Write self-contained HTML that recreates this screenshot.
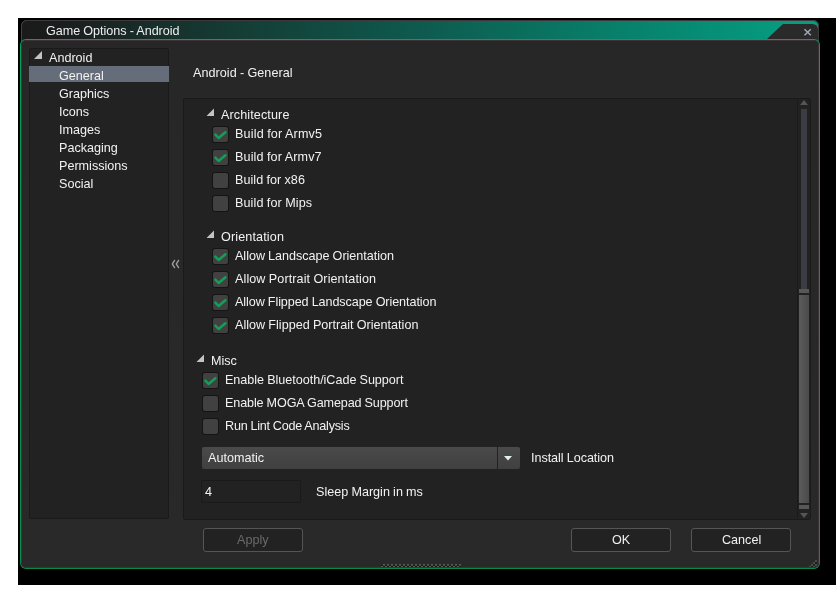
<!DOCTYPE html>
<html><head><meta charset="utf-8">
<style>
html,body{margin:0;padding:0;}
body{-webkit-font-smoothing:antialiased;width:840px;height:589px;background:#fff;position:relative;overflow:hidden;font-family:"Liberation Sans",sans-serif;}
.a{position:absolute;}
.t{position:absolute;will-change:transform;font-size:12.6px;word-spacing:-0.3px;line-height:14px;white-space:nowrap;color:#f2f2f2;}
#blk{left:18px;top:18px;width:818px;height:567px;background:#000;}
#title{left:21px;top:20px;width:798px;height:25px;border-radius:6px 6px 0 0;
 background:linear-gradient(90deg,#1a1a1a 0%,#1a1e1e 5%,#153a33 25%,#0e5a4e 50%,#087d68 72.6%,#06937a 90%,#059d80 97%,#059e80 100%);
 box-shadow:inset 0 1px 0 #3e3a3b, inset 1px 0 0 #444, inset -1px 0 0 #3e3a3b;}
#gb{left:20px;top:39px;width:800px;height:530px;border-radius:6px;background:linear-gradient(#00a35a,#078a4e);}
#body{left:21px;top:40px;width:798px;height:528px;background:linear-gradient(#272727,#292929);box-shadow:inset 0 0 0 1px #3a3234;border-radius:5px;}
.panel{position:absolute;background:#222;border:1px solid #1a1a1a;border-radius:2px;}
.cb{position:absolute;width:15px;height:15px;background:#414141;border-radius:2px;box-shadow:0 0 0 1px #141414;}
.cb svg{position:absolute;left:0;top:0;}
.tri{position:absolute;width:0;height:0;}
.btn{position:absolute;width:98px;height:22px;border:1px solid #555;border-radius:3px;background:#222;}
</style></head><body>
<div id="blk" class="a"></div>
<div id="title" class="a"></div>
<svg class="a" style="left:760px;top:20px" width="60" height="26">
  <path d="M7 19 L23 4 L52 4 Q58 4 58 10 L58 25 L7 25 Z" fill="#2a2a2a"/><path d="M58.5 10 L58.5 25" stroke="#3e3a3b" stroke-width="1"/>
  <path d="M44.5 9.3 L50.8 15.2 M50.8 9.3 L44.5 15.2" stroke="#a0a8b4" stroke-width="1.5"/>
</svg>
<div class="t" style="left:46px;top:24px;color:#eee;letter-spacing:-0.033px">Game Options - Android</div>
<div id="gb" class="a"></div><div id="body" class="a"></div>

<!-- tree -->
<div class="panel" style="left:29px;top:48px;width:138px;height:469px;"></div>
<div class="a" style="left:29px;top:66px;width:140px;height:16px;background:#646d79"></div>
<svg class="a" style="left:34px;top:51px" width="9" height="9"><path d="M8 0 L8 8 L0 8 Z" fill="#c4c4c4"/></svg>
<div class="t" style="left:49px;top:51px">Android</div>
<div class="t" style="left:59px;top:69px">General</div>
<div class="t" style="left:59px;top:87px">Graphics</div>
<div class="t" style="left:59px;top:105px">Icons</div>
<div class="t" style="left:59px;top:123px">Images</div>
<div class="t" style="left:59px;top:141px">Packaging</div>
<div class="t" style="left:59px;top:159px">Permissions</div>
<div class="t" style="left:59px;top:177px">Social</div>

<!-- splitter -->
<svg class="a" style="left:168px;top:256px" width="16" height="16"><path d="M6.6 4.4 L4.3 8 L6.6 11.6 M10.6 4.4 L8.3 8 L10.6 11.6" stroke="#9a9a9a" stroke-width="1.4" fill="none" stroke-linecap="round" stroke-linejoin="round"/></svg>

<div class="t" style="left:193px;top:66px;letter-spacing:0.044px">Android - General</div>

<!-- content panel -->
<div class="panel" style="left:183px;top:98px;width:626px;height:420px;background:#222"></div>

<svg class="a" style="left:206px;top:108px" width="9" height="9"><path d="M8 0.5 L8 8 L0.5 8 Z" fill="#c4c4c4"/></svg>
<div class="t" style="left:221px;top:108px;letter-spacing:0.109px">Architecture</div>

<div class="cb" style="left:213px;top:127px"><svg width="15" height="15"><path d="M2.4 7.7 L5.6 11 L12.4 5.2" stroke="#10a058" stroke-width="2.5" fill="none" stroke-linejoin="round" stroke-linecap="round"/></svg></div>
<div class="t" style="left:235px;top:127px;letter-spacing:0.164px">Build for Armv5</div>
<div class="cb" style="left:213px;top:150px"><svg width="15" height="15"><path d="M2.4 7.7 L5.6 11 L12.4 5.2" stroke="#10a058" stroke-width="2.5" fill="none" stroke-linejoin="round" stroke-linecap="round"/></svg></div>
<div class="t" style="left:235px;top:150px;letter-spacing:0.129px">Build for Armv7</div>
<div class="cb" style="left:213px;top:173px"></div>
<div class="t" style="left:235px;top:173px;letter-spacing:0.042px">Build for x86</div>
<div class="cb" style="left:213px;top:196px"></div>
<div class="t" style="left:235px;top:196px;letter-spacing:0.108px">Build for Mips</div>

<svg class="a" style="left:206px;top:230px" width="9" height="9"><path d="M8 0.5 L8 8 L0.5 8 Z" fill="#c4c4c4"/></svg>
<div class="t" style="left:221px;top:230px;letter-spacing:0.13px">Orientation</div>

<div class="cb" style="left:213px;top:249px"><svg width="15" height="15"><path d="M2.4 7.7 L5.6 11 L12.4 5.2" stroke="#10a058" stroke-width="2.5" fill="none" stroke-linejoin="round" stroke-linecap="round"/></svg></div>
<div class="t" style="left:235px;top:249px;letter-spacing:-0.031px">Allow Landscape Orientation</div>
<div class="cb" style="left:213px;top:272px"><svg width="15" height="15"><path d="M2.4 7.7 L5.6 11 L12.4 5.2" stroke="#10a058" stroke-width="2.5" fill="none" stroke-linejoin="round" stroke-linecap="round"/></svg></div>
<div class="t" style="left:235px;top:272px;letter-spacing:0.092px">Allow Portrait Orientation</div>
<div class="cb" style="left:213px;top:295px"><svg width="15" height="15"><path d="M2.4 7.7 L5.6 11 L12.4 5.2" stroke="#10a058" stroke-width="2.5" fill="none" stroke-linejoin="round" stroke-linecap="round"/></svg></div>
<div class="t" style="left:235px;top:295px;letter-spacing:-0.082px">Allow Flipped Landscape Orientation</div>
<div class="cb" style="left:213px;top:318px"><svg width="15" height="15"><path d="M2.4 7.7 L5.6 11 L12.4 5.2" stroke="#10a058" stroke-width="2.5" fill="none" stroke-linejoin="round" stroke-linecap="round"/></svg></div>
<div class="t" style="left:235px;top:318px;letter-spacing:0.006px">Allow Flipped Portrait Orientation</div>

<svg class="a" style="left:196px;top:354px" width="9" height="9"><path d="M8 0.5 L8 8 L0.5 8 Z" fill="#c4c4c4"/></svg>
<div class="t" style="left:211px;top:354px">Misc</div>

<div class="cb" style="left:203px;top:373px"><svg width="15" height="15"><path d="M2.4 7.7 L5.6 11 L12.4 5.2" stroke="#10a058" stroke-width="2.5" fill="none" stroke-linejoin="round" stroke-linecap="round"/></svg></div>
<div class="t" style="left:225px;top:373px;letter-spacing:-0.031px">Enable Bluetooth/iCade Support</div>
<div class="cb" style="left:203px;top:396px"></div>
<div class="t" style="left:225px;top:396px;letter-spacing:-0.119px">Enable MOGA Gamepad Support</div>
<div class="cb" style="left:203px;top:419px"></div>
<div class="t" style="left:225px;top:419px;letter-spacing:-0.219px">Run Lint Code Analysis</div>

<!-- dropdown -->
<div class="a" style="left:202px;top:447px;width:295px;height:22px;background:linear-gradient(#4a4a4a,#404040);border-radius:2px 0 0 2px"></div>
<div class="a" style="left:498px;top:447px;width:22px;height:22px;background:linear-gradient(#4a4a4a,#404040);border-radius:0 2px 2px 0"></div>
<svg class="a" style="left:504px;top:456px" width="9" height="5"><path d="M0 0 L8 0 L4 4.5 Z" fill="#e4f2ea"/></svg>
<div class="t" style="left:208px;top:451px">Automatic</div>
<div class="t" style="left:531px;top:451px;letter-spacing:-0.047px">Install Location</div>

<!-- input -->
<div class="a" style="left:201px;top:480px;width:98px;height:21px;background:#222;border:1px solid #1a1a1a;border-radius:2px"></div>
<div class="t" style="left:205px;top:485px">4</div>
<div class="t" style="left:316px;top:485px">Sleep Margin in ms</div>

<!-- scrollbar -->
<div class="a" style="left:797px;top:99px;width:1px;height:419px;background:#1a1a1a"></div>
<svg class="a" style="left:800px;top:100px" width="9" height="6"><path d="M4 0 L8 5 L0 5 Z" fill="#555"/></svg>
<div class="a" style="left:801px;top:109px;width:6px;height:180px;background:#3a3d44"></div>
<div class="a" style="left:799px;top:289px;width:10px;height:4px;background:#575757"></div>
<div class="a" style="left:799px;top:295px;width:10px;height:208px;background:linear-gradient(90deg,#5c5c5c,#4a4a4a)"></div>
<div class="a" style="left:799px;top:505px;width:10px;height:4px;background:#575757"></div>
<svg class="a" style="left:800px;top:513px" width="9" height="6"><path d="M0 0 L8 0 L4 5 Z" fill="#555"/></svg>

<!-- buttons -->
<div class="btn" style="left:203px;top:528px"></div>
<div class="t" style="left:237px;top:533px;color:#6a6a6a">Apply</div>
<div class="btn" style="left:571px;top:528px"></div>
<div class="t" style="left:612px;top:533px">OK</div>
<div class="btn" style="left:691px;top:528px"></div>
<div class="t" style="left:722px;top:533px">Cancel</div>

<!-- grip -->
<svg class="a" style="left:381px;top:564px" width="80" height="3"><defs><pattern id="gp" width="4" height="3" patternUnits="userSpaceOnUse"><rect x="2" y="0" width="2" height="1" fill="#585858"/><rect x="2" y="1" width="2" height="1" fill="#484848"/><rect x="0" y="1" width="2" height="1" fill="#1a1a1a"/><rect x="0" y="2" width="2" height="1" fill="#585858"/><rect x="2" y="2" width="2" height="1" fill="#1a1a1a"/></pattern></defs><rect x="0" y="0" width="80" height="3" fill="url(#gp)"/></svg>
<svg class="a" style="left:805px;top:558px" width="14" height="11"><g fill="#202020"><rect x="10" y="4" width="2" height="2"/><rect x="8" y="6" width="2" height="1"/><rect x="6" y="8" width="2" height="1"/><rect x="8" y="8" width="2" height="1"/></g><g fill="#4a4a4a"><rect x="10" y="2" width="2" height="2"/><rect x="8" y="4" width="2" height="2"/><rect x="6" y="6" width="2" height="2"/><rect x="10" y="6" width="2" height="2"/><rect x="4" y="8" width="2" height="1"/><rect x="8" y="8" width="2" height="1"/></g></svg>
</body></html>
